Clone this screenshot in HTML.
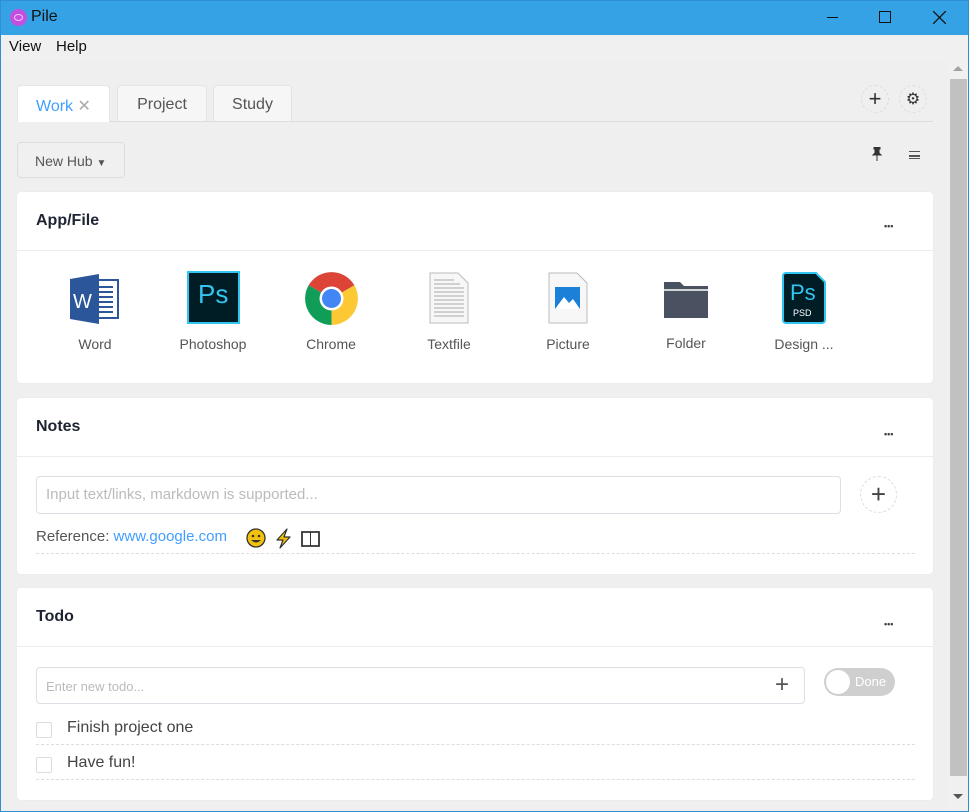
<!DOCTYPE html>
<html><head><meta charset="utf-8"><style>
*{box-sizing:border-box;margin:0;padding:0}
body{width:969px;height:812px;overflow:hidden;background:#efefef;font-family:"Liberation Sans","DejaVu Sans",sans-serif;position:relative;color:#2c3040}
.a{position:absolute}
.title{left:0;top:0;width:969px;height:35px;background:#35a2e5;}
.frame{left:0;top:0;width:969px;height:812px;border:1px solid #2f8fd0;pointer-events:none}
.menu{left:1px;top:35px;width:967px;height:25px;background:#f0f0f0;font-size:15px;color:#111}
.card{background:#fff;border-radius:4px;left:17px;width:916px;box-shadow:0 0 1px #ddd}
.hdr{font-weight:bold;font-size:16px;color:#1f2433;left:19px}
.line{left:0;width:916px;height:1px;background:#ececec}
.dots{font-size:9px;font-weight:bold;color:#444;letter-spacing:0px}
.lbl{font-size:14px;color:#555;text-align:center;width:100px}
.dash{border-top:1px dashed #ddd;height:0}
</style></head><body>
<div class="a title"></div>
<div class="a" style="left:10px;top:9px;width:17px;height:17px;border-radius:50%;background:#c34fe0"></div>
<div class="a" style="left:14px;top:14px;width:9px;height:7px;border:1.5px solid #f2c8ff;border-radius:50%"></div>
<div class="a" style="left:31px;top:8px;font-size:16px;color:#111">Pile</div>
<div class="a" style="left:827px;top:17px;width:11px;height:1px;background:#111"></div>
<div class="a" style="left:879px;top:11px;width:12px;height:12px;border:1.5px solid #111"></div>
<svg class="a" style="left:933px;top:11px" width="13" height="13"><path d="M0 0L13 13M13 0L0 13" stroke="#111" stroke-width="1.3"/></svg>
<div class="a menu"><span class="a" style="left:8px;top:3px">View</span><span class="a" style="left:55px;top:3px">Help</span></div>
<div class="a" style="left:948px;top:60px;width:20px;height:751px;background:#f0f0f0"></div>
<div class="a" style="left:950px;top:79px;width:17px;height:697px;background:#c1c1c1"></div>
<div class="a" style="left:953px;top:66px;border:5px solid transparent;border-bottom-color:#a3a3a3;border-top:0"></div>
<div class="a" style="left:953px;top:794px;border:5px solid transparent;border-top-color:#555;border-bottom:0"></div>
<div class="a" style="left:17px;top:121px;width:916px;height:1px;background:#dcdcdc"></div>
<div class="a" style="left:17px;top:85px;width:93px;height:37px;background:#fff;border:1px solid #e4e4e4;border-bottom:none;border-radius:4px 4px 0 0;font-size:16px;color:#409eff;padding:10px 0 0 18px">Work <span style="color:#aaa">✕</span></div>
<div class="a" style="left:117px;top:85px;width:90px;height:36px;background:#f6f6f6;border:1px solid #e4e4e4;border-bottom:none;border-radius:4px 4px 0 0;font-size:16px;color:#555;text-align:center;padding-top:10px">Project</div>
<div class="a" style="left:213px;top:85px;width:79px;height:36px;background:#f6f6f6;border:1px solid #e4e4e4;border-bottom:none;border-radius:4px 4px 0 0;font-size:16px;color:#555;text-align:center;padding-top:10px">Study</div>
<div class="a" style="left:861px;top:85px;width:28px;height:28px;border:1px dashed #ddd;border-radius:50%;text-align:center;font-size:22px;line-height:26px;color:#333">+</div>
<div class="a" style="left:899px;top:85px;width:28px;height:28px;border:1px dashed #ddd;border-radius:50%;text-align:center;font-size:16px;line-height:27px;color:#333">⚙</div>
<div class="a" style="left:17px;top:142px;width:108px;height:36px;border:1px solid #ddd;border-radius:4px;background:#f0f0f0;font-size:14px;color:#555;padding:10px 0 0 17px">New Hub <span style="font-size:10px">▼</span></div>
<svg class="a" style="left:872px;top:147px" width="10" height="14"><path d="M2 0h6v2h-1v4l2 2H1l2-2V2H2z M5 8v6" fill="#333" stroke="#333" stroke-width="1"/></svg>
<div class="a" style="left:909px;top:151px;width:11px;height:8px;border-top:1.5px solid #555;border-bottom:1.5px solid #555"></div>
<div class="a" style="left:909px;top:155px;width:11px;height:1.5px;background:#555"></div>
<div class="a card" style="top:192px;height:191px">
<div class="a hdr" style="top:20px">App/File</div>
<div class="a dots" style="left:867px;top:29px">•••</div>
<div class="a line" style="top:58px"></div>
<svg class="a" style="left:52px;top:81px" width="52" height="52"><rect x="20" y="7" width="29" height="38" fill="#fff" stroke="#2b579a" stroke-width="2"/><path d="M26 14h18M26 19h18M26 24h18M26 29h18M26 34h18M26 39h18" stroke="#2b579a" stroke-width="2"/><path d="M1 6L30 1v50L1 46z" fill="#2b579a"/><text x="4" y="35" fill="#fff" font-size="20" font-family="Liberation Sans">W</text></svg>
<div class="a lbl" style="left:28px;top:144px">Word</div>
<div class="a" style="left:170px;top:79px;width:53px;height:53px;background:#001d26;border:2px solid #31c5f0;color:#31c5f0;font-size:26px;padding:6px 0 0 9px">Ps</div>
<div class="a lbl" style="left:146px;top:144px">Photoshop</div>
<svg class="a" style="left:288px;top:80px" width="53" height="53" viewBox="-26.5 -26.5 53 53"><path d="M0 0L-22.9-13.2A26.5 26.5 0 0 1 22.9-13.2z" fill="#db4437"/><path d="M0 0L22.9-13.2A26.5 26.5 0 0 1 0 26.5z" fill="#fcc934"/><path d="M0 0L0 26.5A26.5 26.5 0 0 1-22.9-13.2z" fill="#0f9d58"/><circle r="12" fill="#fff"/><circle r="9.5" fill="#4285f4"/></svg>
<div class="a lbl" style="left:264px;top:144px">Chrome</div>
<svg class="a" style="left:412px;top:80px" width="40" height="52"><path d="M1 1h28l10 10v40H1z" fill="#f7f7f7" stroke="#bbb"/><path d="M5 8h20M5 12h26M5 16h30M5 20h30M5 24h30M5 28h30M5 32h30M5 36h30M5 40h30M5 44h30" stroke="#aaa"/></svg>
<div class="a lbl" style="left:382px;top:144px">Textfile</div>
<svg class="a" style="left:531px;top:80px" width="40" height="52"><path d="M1 1h28l10 10v40H1z" fill="#f7f7f7" stroke="#bbb"/><rect x="7" y="15" width="25" height="22" fill="#1c7fd8"/><path d="M7 37l9-12 5 6 4-4 7 10z" fill="#fff"/></svg>
<div class="a lbl" style="left:501px;top:144px">Picture</div>
<svg class="a" style="left:645px;top:86px" width="48" height="42"><path d="M2 4h16l4 4h24v32H2z" fill="#4a5160"/><path d="M2 12h44" stroke="#fff" stroke-width="1.5"/></svg>
<div class="a lbl" style="left:619px;top:143px">Folder</div>
<svg class="a" style="left:765px;top:80px" width="44" height="52"><path d="M1 4a3 3 0 0 1 3-3h30l9 9v38a3 3 0 0 1-3 3H4a3 3 0 0 1-3-3z" fill="#001d26" stroke="#31c5f0" stroke-width="2"/><text x="8" y="28" fill="#31c5f0" font-size="22" font-family="Liberation Sans">Ps</text><text x="11" y="44" fill="#fff" font-size="9" font-family="Liberation Sans">PSD</text></svg>
<div class="a lbl" style="left:737px;top:144px">Design ...</div>
</div>
<div class="a card" style="top:398px;height:176px">
<div class="a hdr" style="top:20px">Notes</div>
<div class="a dots" style="left:867px;top:31px">•••</div>
<div class="a line" style="top:58px"></div>
<div class="a" style="left:19px;top:78px;width:805px;height:38px;border:1px solid #dcdfe6;border-radius:4px;font-size:15px;color:#bbb;padding:9px 0 0 9px">Input text/links, markdown is supported...</div>
<div class="a" style="left:843px;top:78px;width:37px;height:37px;border:1px dashed #ddd;border-radius:50%;text-align:center;font-size:26px;line-height:34px;color:#444">+</div>
<div class="a" style="left:19px;top:130px;font-size:15px;color:#555">Reference: <span style="color:#409eff">www.google.com</span></div>
<svg class="a" style="left:229px;top:129px" width="90" height="22"><circle cx="10" cy="11" r="9" fill="#f4c20d" stroke="#333" stroke-width="1.3"/><circle cx="7" cy="9" r="1.3" fill="#333"/><circle cx="13" cy="9" r="1.3" fill="#333"/><path d="M5 13q5 5 10 0z" fill="#333"/><path d="M41 2l-10 11h6l-3 8 10-11h-6l3-8z" fill="#f4c20d" stroke="#333" stroke-width="1.2" stroke-linejoin="round"/><path d="M56 5h17v14H56z" fill="#fff" stroke="#333" stroke-width="1.8"/><path d="M64.5 5v14" stroke="#333" stroke-width="1"/></svg>
<div class="a dash" style="left:19px;top:155px;width:879px"></div>
</div>
<div class="a card" style="top:588px;height:212px">
<div class="a hdr" style="top:20px">Todo</div>
<div class="a dots" style="left:867px;top:31px">•••</div>
<div class="a line" style="top:58px"></div>
<div class="a" style="left:19px;top:79px;width:769px;height:37px;border:1px solid #dcdfe6;border-radius:4px;font-size:13px;color:#bbb;padding:11px 0 0 9px">Enter new todo...</div>
<div class="a" style="left:758px;top:83px;font-size:24px;color:#555">+</div>
<div class="a" style="left:807px;top:80px;width:71px;height:28px;border-radius:14px;background:#cfcfcf;color:#fff;font-size:13px;padding:6px 0 0 31px">Done</div>
<div class="a" style="left:809px;top:82px;width:24px;height:24px;border-radius:50%;background:#fff"></div>
<div class="a" style="left:19px;top:134px;width:16px;height:16px;border:1px solid #ddd;border-radius:2px"></div>
<div class="a" style="left:50px;top:131px;font-size:16px;color:#444">Finish project one</div>
<div class="a dash" style="left:19px;top:156px;width:879px"></div>
<div class="a" style="left:19px;top:169px;width:16px;height:16px;border:1px solid #ddd;border-radius:2px"></div>
<div class="a" style="left:50px;top:166px;font-size:16px;color:#444">Have fun!</div>
<div class="a dash" style="left:19px;top:191px;width:879px"></div>
</div>
<div class="a frame"></div>
</body></html>
